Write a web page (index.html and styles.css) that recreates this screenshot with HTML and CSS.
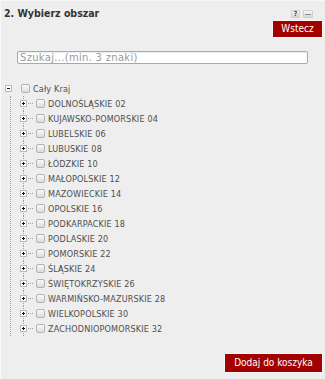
FILE: index.html
```html
<!DOCTYPE html>
<html lang="pl">
<head>
    <meta charset="UTF-8">
    <title>Wybierz obszar</title>
    <link rel="stylesheet" href="styles.css">
</head>
<body>
    <div class="panel">
        <div class="head">
            <h2 class="title">2. Wybierz obszar</h2>
            <div class="tools">
                <span class="tool">?</span>
                <span class="tool tool-min"></span>
            </div>
        </div>

        <div class="back-row">
            <button class="btn btn-back">Wstecz</button>
        </div>

        <div class="search">
            <input type="text" placeholder="Szukaj...(min. 3 znaki)">
        </div>

        <!-- drzewo regionow -->
        <ul class="tree">
            <li>
                <div class="row root-row">
                    <span class="exp minus"></span><span class="cb"></span><span class="label">Cały Kraj</span>
                </div>
                <ul class="children">
                    <li class="row"><span class="exp plus"></span><span class="cb"></span><span class="label">DOLNOŚLĄSKIE 02</span></li>
                    <li class="row"><span class="exp plus"></span><span class="cb"></span><span class="label">KUJAWSKO-POMORSKIE 04</span></li>
                    <li class="row"><span class="exp plus"></span><span class="cb"></span><span class="label">LUBELSKIE 06</span></li>
                    <li class="row"><span class="exp plus"></span><span class="cb"></span><span class="label">LUBUSKIE 08</span></li>
                    <li class="row"><span class="exp plus"></span><span class="cb"></span><span class="label">ŁÓDZKIE 10</span></li>
                    <li class="row"><span class="exp plus"></span><span class="cb"></span><span class="label">MAŁOPOLSKIE 12</span></li>
                    <li class="row"><span class="exp plus"></span><span class="cb"></span><span class="label">MAZOWIECKIE 14</span></li>
                    <li class="row"><span class="exp plus"></span><span class="cb"></span><span class="label">OPOLSKIE 16</span></li>
                    <li class="row"><span class="exp plus"></span><span class="cb"></span><span class="label">PODKARPACKIE 18</span></li>
                    <li class="row"><span class="exp plus"></span><span class="cb"></span><span class="label">PODLASKIE 20</span></li>
                    <li class="row"><span class="exp plus"></span><span class="cb"></span><span class="label">POMORSKIE 22</span></li>
                    <li class="row"><span class="exp plus"></span><span class="cb"></span><span class="label">ŚLĄSKIE 24</span></li>
                    <li class="row"><span class="exp plus"></span><span class="cb"></span><span class="label">ŚWIĘTOKRZYSKIE 26</span></li>
                    <li class="row"><span class="exp plus"></span><span class="cb"></span><span class="label">WARMIŃSKO-MAZURSKIE 28</span></li>
                    <li class="row"><span class="exp plus"></span><span class="cb"></span><span class="label">WIELKOPOLSKIE 30</span></li>
                    <li class="row"><span class="exp plus"></span><span class="cb"></span><span class="label">ZACHODNIOPOMORSKIE 32</span></li>
                </ul>
            </li>
        </ul>

        <div class="foot">
            <button class="btn btn-cart">Dodaj do koszyka</button>
        </div>
    </div>
</body>
</html>
```

FILE: styles.css
```css
/* Style de base */
body {
    margin: 0;
    padding: 0;
    background-color: #eeeeee;
    font-family: "DejaVu Sans Condensed", "DejaVu Sans", sans-serif;
    font-stretch: condensed;
    color: #333333;
}

.panel {
    height: 379px;
    box-sizing: border-box;
    display: flex;
    flex-direction: column;
    border-top: 1px solid #f8f8f8;
    border-left: 1px solid #f8f8f8;
}

/* Naglowek */
.head {
    display: flex;
    align-items: flex-start;
    height: 20px;
    box-sizing: border-box;
    padding: 6px 12px 0 3px;
}

.title {
    margin: 0;
    font-size: 10.5px;
    line-height: 12px;
    font-weight: bold;
    color: #333333;
}

.tools {
    margin-left: auto;
    margin-top: 3px;
    display: flex;
    gap: 3px;
}

.tool {
    width: 9px;
    height: 8px;
    box-sizing: border-box;
    border: 1px solid #d0d0d0;
    border-radius: 1px;
    background: linear-gradient(#f8f8f8, #d6d6d6);
    font: bold 7px/6px "DejaVu Sans", sans-serif;
    text-align: center;
    color: #555555;
}

.tool-min {
    width: 10px;
    background: linear-gradient(#8a8a8a, #8a8a8a) center / 6px 1px no-repeat, linear-gradient(#f8f8f8, #d6d6d6);
}

/* Przyciski */
.back-row {
    display: flex;
    justify-content: flex-end;
    padding-right: 3px;
}

.btn {
    font-family: inherit;
    font-stretch: condensed;
    background-color: #a30000;
    color: #ffffff;
    border: none;
    box-shadow: 0 0 0 1px #f7f7f7;
    font-size: 10px;
    padding: 0;
    cursor: pointer;
}

.btn-back {
    width: 49px;
    height: 16px;
    line-height: 16px;
}

.btn-cart {
    width: 97px;
    height: 18px;
    line-height: 18px;
}

/* Wyszukiwarka */
.search {
    margin-top: 14px;
    padding-left: 16px;
}

.search input {
    display: block;
    width: 291px;
    height: 13px;
    box-sizing: border-box;
    margin: 0;
    border: 1px solid #a9a9a9;
    border-radius: 2px;
    background: #ffffff;
    box-shadow: inset 0 1px 1px rgba(0, 0, 0, 0.08);
    padding: 0 2px;
    font-family: "DejaVu Sans", sans-serif;
    font-stretch: normal;
    font-size: 10px;
    line-height: 11px;
    letter-spacing: 0.3px;
    color: #555555;
}

.search input::placeholder {
    color: #9a9a9a;
}

/* Drzewo */
.tree,
.tree ul {
    list-style: none;
    margin: 0;
    padding: 0;
}

.tree {
    margin-top: 17px;
}

.row {
    display: flex;
    align-items: center;
    height: 15px;
    font-size: 9px;
    letter-spacing: 0.15px;
    color: #4f4f4f;
}

.root-row {
    padding-left: 4px;
}

.children {
    margin-left: 9px !important;
    border-left: 1px dotted #a0a0a0;
}

.children .row {
    padding-left: 9px;
    /* linia pionowa + krotka pozioma przy plusie */
    background:
        repeating-linear-gradient(#a0a0a0 0 1px, transparent 1px 2px) 12px 0 / 1px 100% no-repeat,
        repeating-linear-gradient(90deg, #a0a0a0 0 1px, transparent 1px 2px) 17px 7px / 6px 1px no-repeat;
}

.exp {
    flex: none;
    width: 7px;
    height: 7px;
    box-sizing: border-box;
    border: 1px solid #b8b8b8;
    background-color: #ffffff;
}

.exp.minus {
    background: linear-gradient(#111, #111) 1px 2px / 3px 1px no-repeat, #ffffff;
}

.exp.plus {
    background:
        linear-gradient(#111, #111) 1px 2px / 3px 1px no-repeat,
        linear-gradient(#111, #111) 2px 1px / 1px 3px no-repeat,
        #ffffff;
}

.cb {
    flex: none;
    width: 9px;
    height: 9px;
    box-sizing: border-box;
    margin-left: 9px;
    margin-right: 3px;
    border: 1px solid #b3b3b3;
    border-radius: 2px;
    background: linear-gradient(#fafafa, #dcdcdc);
}

.label {
    white-space: nowrap;
}

/* Stopka */
.foot {
    margin-top: auto;
    display: flex;
    justify-content: flex-end;
    padding: 0 3px 7px 0;
}
```
